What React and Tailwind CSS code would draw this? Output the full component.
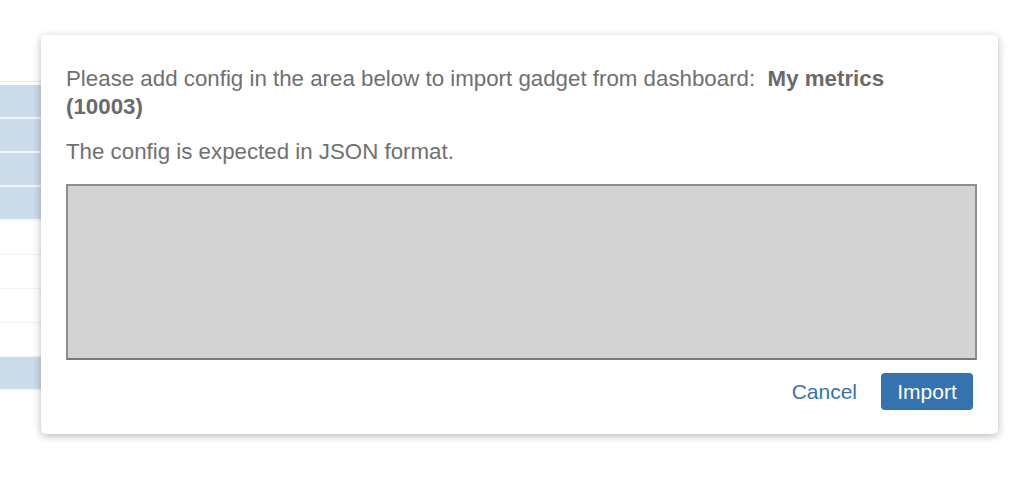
import { useState } from "react";

const rows = [
  "blue",
  "blue",
  "blue",
  "blue",
  "white",
  "white",
  "white",
  "white",
  "blue",
];

export default function App() {
  const [config, setConfig] = useState("");

  return (
    <div
      className="relative w-[1024px] h-[502px] bg-white overflow-hidden"
      style={{ fontFamily: '"Liberation Sans", Arial, sans-serif' }}
    >
      {/* page behind the dialog */}
      <div className="pt-[81px] w-[900px]">
        <div className="border-t border-[#ececec] pt-[3px]">
          {rows.map((r, i) => (
            <div
              key={i}
              className={
                r == "blue"
                  ? "h-[34px] bg-[#ccdcea] border-b-2 border-[#f4f7fa]"
                  : "h-[34px] bg-white border-b border-[#f2f2f2]"
              }
            />
          ))}
        </div>
      </div>

      {/* dialog */}
      <div className="absolute left-[41px] top-[35px] w-[957px] bg-white rounded-[5px] shadow-[0_2px_8px_rgba(0,0,0,0.28)] px-[25px] pt-[30px] pb-[24px] text-[#707070]">
        <p className="text-[22.3px] leading-[28px] max-w-[890px]">
          Please add config in the area below to import gadget from dashboard:{" "}
          <b className="font-bold text-[#6a6a6a]">&nbsp;My metrics (10003)</b>
        </p>
        <p className="text-[22.3px] leading-[28px] mt-[17px]">
          The config is expected in JSON format.
        </p>
        <textarea
          value={config}
          onChange={(e) => setConfig(e.target.value)}
          className="block mt-[18px] w-[911px] h-[176px] bg-[#d3d3d3] border-2 border-[#8e8e8e] border-b-[#787878] resize-none outline-none"
        />
        <div className="flex justify-end items-center gap-[24px] mt-[13px]">
          <button className="text-[21px] text-[#3572b0] leading-none">
            Cancel
          </button>
          <button className="h-[37px] w-[92px] rounded-[4px] bg-[#3572b0] text-white text-[21px] leading-none">
            Import
          </button>
        </div>
      </div>
    </div>
  );
}
